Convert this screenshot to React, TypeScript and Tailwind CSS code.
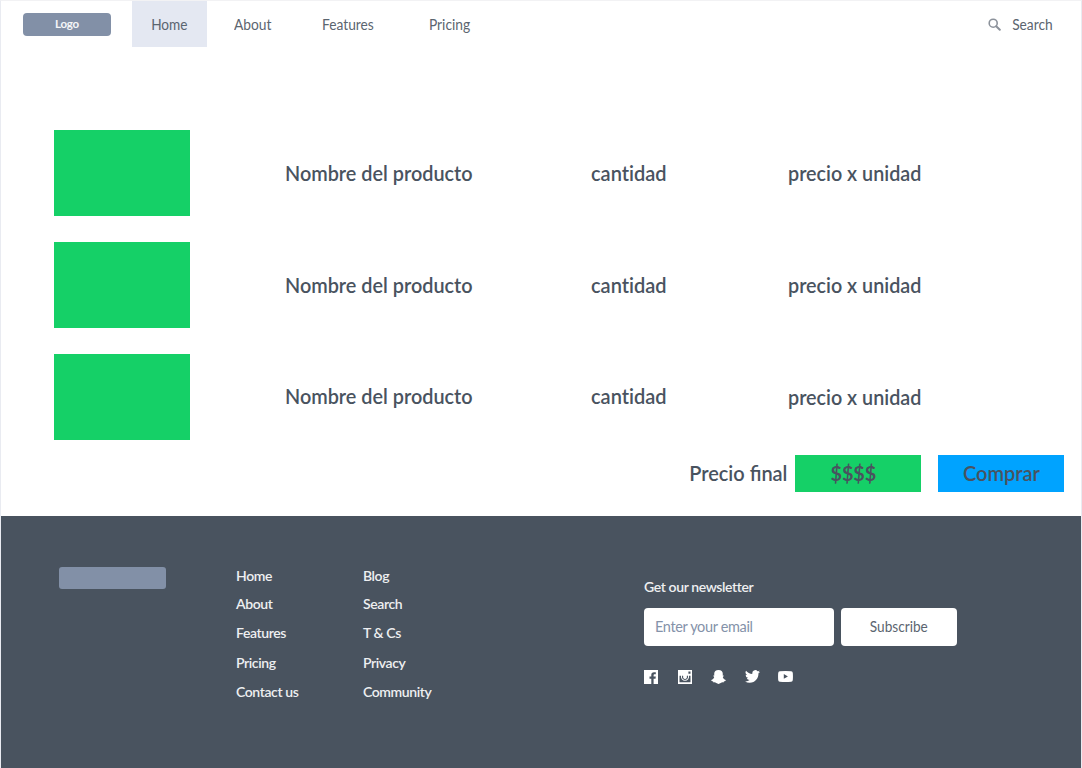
import React from "react";

const products = [
  { name: "Nombre del producto", shift: "pb-px" },
  { name: "Nombre del producto", shift: "pb-px" },
  { name: "Nombre del producto", shift: "pb-[2px]" },
];

const Facebook = () => (
  <svg width="14" height="14" viewBox="0 0 14 14" fill="white">
    <path d="M0 0H14V14H9.6V8.7H11.5L11.8 6.6H9.6V5.3C9.6 4.6 9.9 4.3 10.6 4.3H11.8V2.3H10C8.2 2.3 7.3 3.4 7.3 5V6.6H5.5V8.7H7.3V14H0Z" />
  </svg>
);

const Instagram = () => (
  <svg width="14" height="14" viewBox="0 0 14 14">
    <path fill="white" fillRule="evenodd" d="M0 0H14V14H0ZM1.5 5.8V12.3H12.5V5.8H11A4.1 4.1 0 1 1 3 5.8ZM10.4 1.6V3.8H12.5V1.6Z" />
    <circle cx="7" cy="7" r="3.1" fill="white" />
    <path d="M4.8 5.8A2.5 2.5 0 1 0 9.2 5.8" fill="none" stroke="#49535f" strokeWidth="1.1" />
  </svg>
);

const Snapchat = () => (
  <svg width="15" height="14" viewBox="0 0 15 14" fill="white">
    <path d="M7.5 0C10.3 0 11.8 1.6 11.8 3.9L11.7 5.5C12.4 5.2 13 5.6 12.6 6.2L11.8 6.9C12.1 8.2 13.1 9.4 14.7 10C15 10.9 13.9 11.3 12.9 11.5L12.5 12.4C11.3 12.1 10.5 12.4 9.7 13.1C8.4 14.2 6.6 14.2 5.3 13.1C4.5 12.4 3.7 12.1 2.5 12.4L2.1 11.5C1.1 11.3 0 10.9 .3 10C1.9 9.4 2.9 8.2 3.2 6.9L2.4 6.2C2 5.6 2.6 5.2 3.3 5.5L3.2 3.9C3.2 1.6 4.7 0 7.5 0Z" />
  </svg>
);

const Twitter = () => (
  <svg width="15" height="13" viewBox="0 2 24 20" preserveAspectRatio="none" fill="white">
    <path d="M23.95 4.57a10 10 0 0 1-2.82.77 4.96 4.96 0 0 0 2.16-2.72c-.95.55-2 .95-3.13 1.18a4.92 4.92 0 0 0-8.38 4.48C7.69 8.1 4.07 6.13 1.64 3.16a4.92 4.92 0 0 0 1.52 6.57 4.9 4.9 0 0 1-2.23-.61v.06a4.92 4.92 0 0 0 3.95 4.83 5 5 0 0 1-2.21.08 4.94 4.94 0 0 0 4.6 3.42A9.87 9.87 0 0 1 0 19.54a13.99 13.99 0 0 0 7.56 2.21c9.05 0 14-7.5 14-13.98 0-.21 0-.42-.02-.63a9.94 9.94 0 0 0 2.41-2.57z" />
  </svg>
);

const Youtube = () => (
  <svg width="15" height="11" viewBox="0 0 15 11" fill="white">
    <path fillRule="evenodd" d="M1.8.2Q7.5-.2 13.2.2Q14.7.3 14.8 2Q15.1 5.5 14.8 9Q14.7 10.6 13.2 10.7Q7.5 11.1 1.8 10.7Q.3 10.6 .2 9Q-.1 5.5 .2 2Q.3.3 1.8.2ZM5.8 3.1V7.7L9.9 5.4Z" />
  </svg>
);

function FooterLinks({ items, className }: { items: string[]; className: string }) {
  return (
    <ul className={`grid grid-rows-[28px_28px_30px_30px_28px] items-center whitespace-nowrap text-[14px] leading-5 font-semibold tracking-[-0.4px] text-[#eeeff1] ${className}`}>
      {items.map((item) => (
        <li key={item}>{item}</li>
      ))}
    </ul>
  );
}

export default function App() {
  return (
    <div className="flex h-[768px] w-[1082px] flex-col overflow-hidden border-x border-t border-x-[#e9ebf1] border-t-[#f2f2f4] bg-white font-['Lato',sans-serif] text-[#49535f]">
      <header className="flex h-[46px] items-start text-[14.5px] whitespace-nowrap text-[#5b6570]">
        <div className="mt-3 ml-[22px] h-[23px] w-[88px] rounded-[4px] bg-[#8290a7] text-center text-[11.5px] leading-[21px] font-bold tracking-[-0.2px] text-[#f5f6f8]">Logo</div>
        <nav className="ml-[21px] flex h-[46px] leading-[47px]">
          <a className="w-[75px] bg-[#e4e8f2] text-center"><span className="inline-block scale-x-[0.94]">Home</span></a>
          <a className="ml-[27px] w-[88px] origin-left scale-x-[0.95]">About</a>
          <a className="w-[106px] origin-left scale-x-[0.95]">Features</a>
          <a className="origin-left scale-x-[0.95] pl-px">Pricing</a>
        </nav>
        <div className="mr-7 ml-auto flex h-[46px] items-center leading-[47px]">
          <svg className="mr-[9px]" width="13" height="13" viewBox="0 0 13 13" fill="none" stroke="#8c929b">
            <circle cx="5.2" cy="5.2" r="4" strokeWidth="1.6" />
            <path d="M8.2 8.2L11.8 11.8" strokeWidth="2" strokeLinecap="round" />
          </svg>
          <span className="origin-right scale-x-[0.95]">Search</span>
        </div>
      </header>

      <main className="flex h-[469px] flex-col pt-[83px] text-[21px] leading-6 font-semibold whitespace-nowrap">
        <section className="flex flex-col gap-[26px] pl-[53px]">
          {products.map(({ name, shift }, i) => (
            <div key={i} className="grid h-[86px] grid-cols-[136px_95px_306px_197px_auto] items-center">
              <div className="h-full bg-[#15d067]" />
              <div />
              <span className={`origin-left scale-x-[0.944] ${shift}`}>{name}</span>
              <span className={`origin-left scale-x-[0.952] [font-variant-ligatures:no-common-ligatures] ${shift}`}>cantidad</span>
              <span className="origin-left scale-x-[0.94] pb-px">precio x unidad</span>
            </div>
          ))}
        </section>
        <section className="mt-[15px] mr-[17px] flex h-[37px] items-center justify-end leading-[36px]">
          <span className="mr-2 origin-right scale-x-[0.95] pb-px">Precio final</span>
          <div className="h-full w-[126px] bg-[#15d067] pr-[9px] text-center font-bold"><span className="inline-block scale-x-[0.94]">$$$$</span></div>
          <button className="ml-[17px] h-full w-[126px] bg-[#00a3ff] pb-px text-center"><span className="inline-block scale-x-[0.95]">Comprar</span></button>
        </section>
      </main>

      <footer className="flex h-[252px] shrink-0 bg-[#49535f]">
        <div className="mt-[51px] ml-[58px] h-[22px] w-[107px] rounded-[3px] bg-[#8290a7]" />
        <FooterLinks className="mt-[46px] ml-[70px] h-[144px] w-[127px]" items={["Home", "About", "Features", "Pricing", "Contact us"]} />
        <FooterLinks className="mt-[46px] h-[144px] w-[281px]" items={["Blog", "Search", "T & Cs", "Privacy", "Community"]} />
        <section className="pt-[61px] text-[14.5px] leading-5">
          <h2 className="text-[14px] font-semibold tracking-[-0.38px] text-[#eeeff1]">Get our newsletter</h2>
          <div className="mt-[11px] flex gap-[7px]">
            <input className="h-[38px] w-[190px] rounded-[4px] bg-white px-[11px] pb-[2px] tracking-[-0.35px] placeholder:text-[#8492a9]" placeholder="Enter your email" />
            <button className="h-[38px] w-[116px] rounded-[4px] bg-white pb-px text-[#5b6570]"><span className="inline-block scale-x-[0.94]">Subscribe</span></button>
          </div>
          <div className="mt-[23px] flex h-[15px] items-center">
            <span className="w-[34px]"><Facebook /></span>
            <span className="w-[33px]"><Instagram /></span>
            <span className="w-[34px]"><Snapchat /></span>
            <span className="w-[33px]"><Twitter /></span>
            <Youtube />
          </div>
        </section>
      </footer>
    </div>
  );
}
